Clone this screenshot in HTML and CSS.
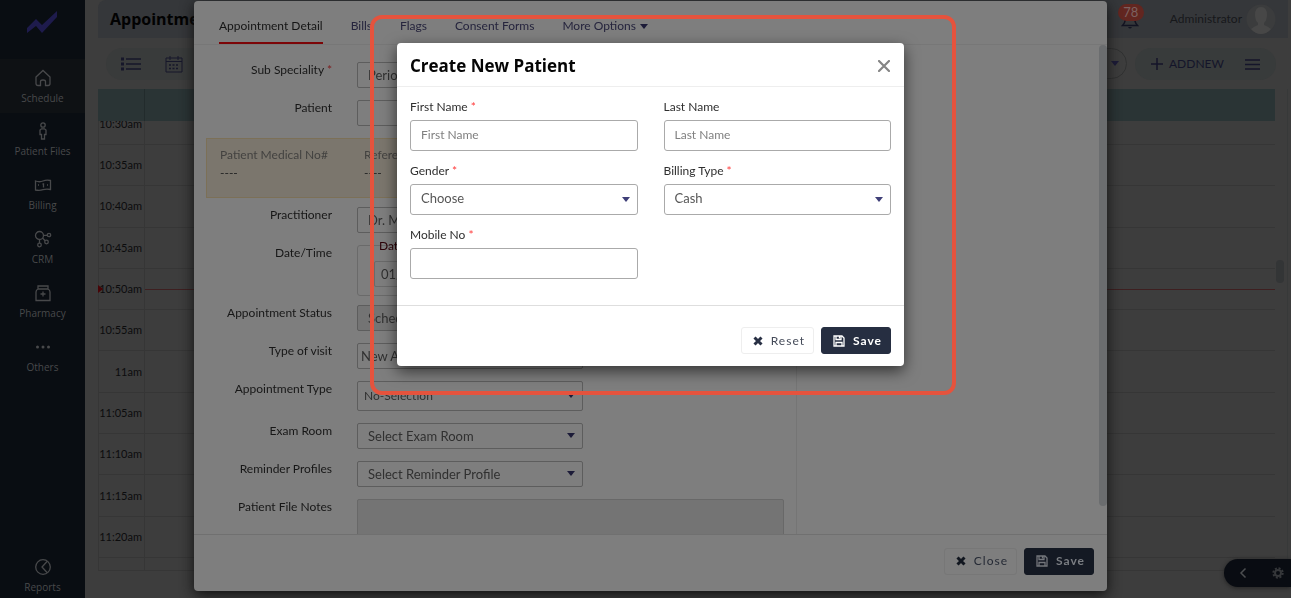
FILE: index.html
```html
<!DOCTYPE html>
<html lang="en">
<head>
<meta charset="utf-8">
<title>Appointments</title>
<link rel="stylesheet" href="styles.css">
</head>
<body>
<div class="app">
  <nav class="sidebar">
    <svg class="logo" width="30" height="24" viewBox="0 0 30 24"><path d="M0 17 9 8l6 6L30 0v6L15 22 9 15 0 22z" fill="#1e1b4c"/></svg>
    <a class="nav-item active" href="#"><svg width="18" height="18" viewBox="0 0 18 18"><path d="M2 8 9 1.500l7 6.500v6.500q0 2-2 2h-2.500v-4q0-1.500-2.500-1.500t-2.500 1.500v4H4q-2 0-2-2z"/></svg><span>Schedule</span></a>
    <a class="nav-item" href="#"><svg width="18" height="18" viewBox="0 0 18 18"><circle cx="9" cy="3" r="2.200"/><path d="M7.500 6.800h3l1.500 1.200v4.500h-1.500v4.500h-3v-4.500H6V8z"/></svg><span>Patient Files</span></a>
    <a class="nav-item" href="#"><svg width="18" height="18" viewBox="0 0 18 18"><path d="M1.500 5q4 1.500 7.500 0t7.500-.5v9q-4-1-7.500.2t-7.500.3zM8.500 8h1v3.500M4 9h1M13 9h1"/></svg><span>Billing</span></a>
    <a class="nav-item" href="#"><svg width="18" height="18" viewBox="0 0 18 18"><circle cx="5.500" cy="5.500" r="4"/><circle cx="15" cy="5" r="1.700"/><circle cx="12.500" cy="12" r="1.800"/><circle cx="5.500" cy="15" r="1.800"/><path d="M9.500 5.300h3.700M8.500 8l2.700 2.700M5.500 9.500v3.500"/></svg><span>CRM</span></a>
    <a class="nav-item" href="#"><svg width="18" height="18" viewBox="0 0 18 18"><path d="M4 5V2h10v3M4 5h10q2 1 2 3v8.500H2V8q0-2 2-3zM9 7.500v5M6.500 10h5"/></svg><span>Pharmacy</span></a>
    <a class="nav-item" href="#"><svg width="18" height="18" viewBox="0 0 18 18"><g class="dots"><circle cx="3.500" cy="9" r="1.500"/><circle cx="9" cy="9" r="1.500"/><circle cx="14.500" cy="9" r="1.500"/></g></svg><span>Others</span></a>
    <a class="nav-item last" href="#"><svg width="18" height="18" viewBox="0 0 18 18"><circle cx="9" cy="9" r="7.300"/><path d="M13 3.500 8 9l5 5.500"/></svg><span>Reports</span></a>
  </nav>
  <main class="main">
    <header class="topbar">
      <h1>Appointments</h1>
      <div class="account">
        <div class="bell">
          <svg width="18" height="20" viewBox="0 0 18 20"><path d="M1.500 15.500q3-3 3-8.500Q5.500 2 9 2t4.500 5q0 5.500 3 8.500z" fill="none" stroke="#121321" stroke-width="1.500"/><path d="M7 17h4q-2 3-4 0z" fill="#121321"/></svg>
          <span class="badge">78</span>
        </div>
        <span class="user">Administrator</span>
        <svg class="avatar" width="30" height="30" viewBox="0 0 30 30"><circle cx="15" cy="15" r="14.500" fill="#3b3c3d"/><path d="M15 3q6 0 6 8 0 5-3 8v2q5 2 7 4-4 5-10 5T5 25q2-2 7-4v-2q-3-3-3-8 0-8 6-8z" fill="#474747"/></svg>
      </div>
    </header>
    <div class="toolbar">
      <div class="views">
        <svg width="20" height="14" viewBox="0 0 20 14"><path d="M0 2h3M0 7h3M0 12h3" stroke-width="3"/><path d="M5 2h15M5 7h15M5 12h15" stroke-width="1.500"/></svg>
        <svg width="18" height="18" viewBox="0 0 18 18"><path d="M1 3h16v14H1zM1 6.500h16M5 1v4M13 1v4"/><path d="M4 10h10M4 13.500h10" stroke-dasharray="2 1.500" stroke-width="1.500"/></svg>
      </div>
      <div class="tools">
        <button class="picker" aria-label="Choose view"><i class="caret"></i></button>
        <div class="addnew">
          <button><svg width="12" height="12" viewBox="0 0 12 12"><path d="M6 0v12M0 6h12"/></svg>ADDNEW</button>
          <button aria-label="Menu"><svg width="15" height="11" viewBox="0 0 15 11"><path d="M0 1h15M0 5.500h15M0 10h15"/></svg></button>
        </div>
      </div>
    </div>
    <section class="calendar">
      <div class="cal-head"></div>
      <div class="slots">
        <div class="slot first"><span>10:30am</span></div>
        <div class="slot"><span>10:35am</span></div>
        <div class="slot"><span>10:40am</span></div>
        <div class="slot"><span>10:45am</span></div>
        <div class="slot now"><span>10:50am</span></div>
        <div class="slot"><span>10:55am</span></div>
        <div class="slot"><span>11am</span></div>
        <div class="slot"><span>11:05am</span></div>
        <div class="slot"><span>11:10am</span></div>
        <div class="slot"><span>11:15am</span></div>
        <div class="slot"><span>11:20am</span></div>
        <div class="slot end"><span></span></div>
      </div>
      <i class="cal-thumb"></i>
    </section>
  </main>
</div>

<div class="overlay detail-layer">
  <section class="detail" role="dialog" aria-label="Appointment Detail">
    <nav class="tabs">
      <a class="current" href="#">Appointment Detail</a>
      <a href="#">Bills</a>
      <a href="#">Flags</a>
      <a href="#">Consent Forms</a>
      <a href="#">More Options <i class="caret"></i></a>
    </nav>
    <div class="detail-body">
      <form class="detail-form">
        <div class="row"><label for="sub">Sub Speciality <b>*</b></label><input id="sub" value="Periodontics"></div>
        <div class="row"><label for="pat">Patient</label><input id="pat"></div>
        <dl class="banner">
          <div><dt>Patient Medical No#</dt><dd>----</dd></div>
          <div><dt>Reference No</dt><dd>----</dd></div>
        </dl>
        <div class="row"><label for="doc">Practitioner</label><input id="doc" value="Dr. M"></div>
        <div class="row"><label for="date">Date/Time</label>
          <div class="datebox"><span>Date</span><input id="date" value="01/"></div></div>
        <div class="row"><label for="status">Appointment Status</label><input id="status" class="shaded" value="Scheduled"></div>
        <div class="row"><label for="visit">Type of visit</label><input id="visit" class="tight" value="New Appointment"></div>
        <div class="row"><label for="type">Appointment Type</label><div class="select tall"><select id="type"><option>No-Selection</option></select><i class="caret"></i></div></div>
        <div class="row"><label for="room">Exam Room</label><div class="select"><select id="room"><option>Select Exam Room</option></select><i class="caret"></i></div></div>
        <div class="row"><label for="rem">Reminder Profiles</label><div class="select"><select id="rem"><option>Select Reminder Profile</option></select><i class="caret"></i></div></div>
        <div class="row wide"><label for="notes">Patient File Notes</label><textarea id="notes"></textarea></div>
      </form>
      <aside class="side"></aside>
      <i class="detail-thumb"></i>
    </div>
    <footer class="detail-foot">
      <button class="btn"><svg class="cross" width="10" height="10" viewBox="0 0 10 10"><path d="m1.500 1.500 7 7m0-7-7 7"/></svg>Close</button>
      <button class="btn primary"><svg class="disk" width="12" height="12" viewBox="0 0 12 12"><path d="M1 1h8l2 2v8H1zM3 1v3.500h5V1M3 11V7.500h6V11"/><path d="M6.500 1v2.500"/></svg>Save</button>
    </footer>
  </section>
</div>

<div class="overlay create-layer">
  <section class="create" role="dialog" aria-labelledby="create-title">
    <i class="highlight"></i>
    <header class="create-head">
      <h2 id="create-title">Create New Patient</h2>
      <button class="x" aria-label="Close dialog"><svg width="12" height="12" viewBox="0 0 12 12"><path d="m1 1 10 10M11 1 1 11"/></svg></button>
    </header>
    <form class="create-form">
      <div class="field"><label for="first">First Name <b>*</b></label><input id="first" placeholder="First Name"></div>
      <div class="field"><label for="last">Last Name</label><input id="last" placeholder="Last Name"></div>
      <div class="field"><label for="gender">Gender <b>*</b></label><div class="select"><select id="gender"><option>Choose</option></select><i class="caret"></i></div></div>
      <div class="field"><label for="bill">Billing Type <b>*</b></label><div class="select"><select id="bill"><option>Cash</option></select><i class="caret"></i></div></div>
      <div class="field"><label for="mobile">Mobile No <b>*</b></label><input id="mobile"></div>
    </form>
    <footer class="create-foot">
      <button class="btn"><svg class="cross" width="10" height="10" viewBox="0 0 10 10"><path d="m1.500 1.500 7 7m0-7-7 7"/></svg>Reset</button>
      <button class="btn primary"><svg class="disk" width="12" height="12" viewBox="0 0 12 12"><path d="M1 1h8l2 2v8H1zM3 1v3.500h5V1M3 11V7.500h6V11"/><path d="M6.500 1v2.500"/></svg>Save</button>
    </footer>
  </section>
</div>

<div class="dock">
  <svg width="8" height="12" viewBox="0 0 8 12"><path d="M6.500 1.500 2 6l4.500 4.500" fill="none" stroke="#4c4e50" stroke-width="1.500"/></svg>
  <svg width="12" height="12" viewBox="0 0 12 12"><circle cx="6" cy="6" r="3" fill="none" stroke="#35373a" stroke-width="2"/><circle cx="6" cy="6" r="4.700" fill="none" stroke="#35373a" stroke-width="2" stroke-dasharray="2 1.690"/></svg>
</div>
</body>
</html>
```

FILE: styles.css
```css
* { box-sizing: border-box; }
body {
  margin: 0;
  background: #3d3d3d;
  font: 13px/16px Lato, "Open Sans", sans-serif;
  overflow: hidden;
}
a { text-decoration: none; color: inherit; }
h1, h2, dl, dd { margin: 0; }
button, input, select, textarea { font: inherit; color: inherit; }
button { border: 0; background: none; padding: 0; }
svg { flex: none; display: block; }
.caret {
  border: 4px solid transparent;
  border-top: 5px solid #1c1b38;
  border-bottom: 0;
}

.app { display: flex; min-height: 100vh; }
.sidebar {
  width: 85px;
  flex: none;
  display: flex;
  flex-direction: column;
  background: #090d12;
  color: #48494b;
  font: 10px/16px "Open Sans", sans-serif;
}
.logo { margin: 11px 27px 24px; }
.nav-item {
  height: 54px;
  padding-top: 9px;
  display: flex;
  flex-direction: column;
  align-items: center;
  gap: 3px;
}
.nav-item.active { background: #0e1114; padding-top: 10px; }
.nav-item svg { fill: none; stroke: #48494b; stroke-width: 1.3; }
.nav-item .dots { fill: #48494b; stroke: none; }
.nav-item.last { margin-top: auto; height: 40px; padding: 0; }

.main { flex: 1; min-width: 0; display: flex; flex-direction: column; padding: 0 3px 27px 13px; }
.topbar {
  height: 38px;
  display: flex;
  align-items: center;
  justify-content: space-between;
  padding: 0 12px;
  background: #35373a;
  border-radius: 8px 0 0 0;
}
.topbar h1 { font: 700 16px/20px "Open Sans", sans-serif; color: #020202; }
.account { display: flex; align-items: center; gap: 4px; color: #17181a; }
.user { margin-left: 27px; font-size: 12px; }
.bell { position: relative; margin-top: 1px; }
.badge {
  position: absolute;
  left: -3px;
  top: -6px;
  width: 26px;
  height: 17px;
  border-radius: 9px;
  background: #622620;
  color: #7c6260;
  text-align: center;
}
.toolbar { height: 51px; display: flex; justify-content: space-between; padding: 10px 12px 9px 8px; }
.views { width: 200px; display: flex; align-items: center; gap: 24px; padding-left: 15px; background: #393b3b; border-radius: 16px; }
.views svg { fill: none; stroke: #16172a; }
.tools { display: flex; gap: 8px; }
.picker { width: 60px; height: 31px; border: 1px solid #303131; border-radius: 16px; display: flex; align-items: center; justify-content: flex-end; padding-right: 7px; }
.addnew { width: 141px; display: flex; align-items: center; justify-content: space-between; padding: 0 16px; background: #383b3b; border-radius: 16px; color: #14152a; font-size: 12px; }
.addnew button { display: flex; align-items: center; gap: 6px; }
.addnew svg { stroke: #14152a; stroke-width: 1.5; }
.calendar { position: relative; flex: 1; display: flex; flex-direction: column; padding-right: 12px; border-right: 1px solid #373939; }
.cal-head { height: 32px; background: linear-gradient(90deg, transparent 46px, #222b2c 46px, #222b2c 47px, transparent 47px) #2a3435; }
.slots { flex: 1; display: flex; flex-direction: column; }
.slot { flex: 1; display: flex; border: 1px solid #363636; border-width: 0 0 1px 1px; position: relative; }
.slot span { width: 46px; display: flex; align-items: center; justify-content: flex-end; border-right: 1px solid #363636; padding-right: 2px; font-size: 11px; color: #0c0c0d; }
.slot.first { flex: 0 0 24px; overflow: hidden; }
.slot.first span { align-items: flex-start; margin-top: -5px; }
.slot.end { flex: 0 0 13px; }
.slot.now::before { content: ""; position: absolute; left: -1px; top: 16px; border: 4px solid transparent; border-left: 5px solid #480407; border-right: 0; }
.slot.now::after { content: ""; position: absolute; left: 46px; right: 0; top: 20px; height: 1px; background: #3e1f20; }
.cal-thumb { position: absolute; right: 3px; top: 171px; width: 8px; height: 23px; border-radius: 4px; background: #333536; }

.overlay { position: fixed; inset: 0 0 0 10px; display: flex; justify-content: center; align-items: flex-start; }
.detail-layer { padding: 1px 0 7px; }
.detail {
  width: 913px;
  height: 100%;
  display: flex;
  flex-direction: column;
  background: #7e7e7e;
  border-radius: 4px;
  box-shadow: 0 4px 14px #111;
}
.tabs { flex: none; display: flex; gap: 28px; padding: 0 25px; border-bottom: 1px solid #777; color: #25243d; font-size: 12px; }
.tabs a { padding: 17px 0 8px; border-bottom: 2px solid transparent; display: flex; align-items: center; gap: 4px; }
.tabs .current { border-color: #7c0507; color: #151515; }
.detail-body { flex: 1; min-height: 0; display: flex; position: relative; overflow: hidden; }
.detail-form { width: 602px; padding: 17px 12px 0; display: flex; flex-direction: column; gap: 12px; color: #303030; }
.detail-form > * { flex: none; }
.side { flex: 1; border-left: 1px solid #757575; }
.detail-thumb { position: absolute; right: 0; top: 0; width: 8px; height: 461px; border-radius: 4px; background: #6b6d6f; }
.row { display: grid; grid-template-columns: 126px 226px; column-gap: 25px; align-items: start; }
.row.wide { grid-template-columns: 126px 1fr; }
.row label { text-align: right; color: #171717; font-size: 12px; }
label b { font-weight: 400; color: #ff3b3b; }
.row label b { color: #7e1b1d; }
.row input, .row select, .row textarea {
  width: 100%;
  height: 26px;
  border: 1px solid #5d5d5d;
  border-radius: 2px;
  background: #7e7e7e;
  padding: 0 10px;
}
.row input.shaded { background: #747474; }
.row input.tight { padding: 0 3px; }
.row textarea { display: block; height: 60px; background: #747474; border-color: #686868; resize: none; }
.select { position: relative; }
.select select { appearance: none; display: block; }
.select .caret { position: absolute; right: 8px; top: 50%; margin-top: -3px; }
.row .tall select { height: 30px; padding: 0 6px; font-size: 12px; }
.banner { height: 60px; margin-bottom: -3px; padding: 8px 13px; display: grid; grid-template-columns: 144px 1fr; background: #7b766d; border: 1px solid #7c7057; color: #434240; font-size: 12px; }
.banner dd { margin-top: 2px; color: #222; }
.datebox { height: 51px; margin-bottom: -3px; border: 1px solid #6a6a6a; border-radius: 3px; padding: 0 10px 0 16px; }
.datebox span { display: block; margin-top: -8px; padding-left: 5px; color: #2c0308; height: 23px; line-height: 16px; font-size: 12px; }
.row .datebox input { border-color: #6a6a6a; padding: 0 6px; }
.detail-foot { flex: none; height: 57px; border-top: 1px solid #707070; display: flex; justify-content: flex-end; align-items: center; gap: 7px; padding: 0 13px 4px; color: #252a35; }

.btn { height: 27px; padding: 0 8px 0 11px; display: flex; align-items: center; gap: 8px; border: 1px solid #777; border-radius: 3px; letter-spacing: 1px; font-size: 12px; }
.btn svg { fill: none; stroke: #11161f; stroke-width: 3; }
.btn .disk { stroke: #73767b; stroke-width: 1.3; }
.btn.primary { background: #141923; border-color: #141923; color: #7a7d82; font-weight: 700; }

.create-layer { padding-top: 43px; }
.create { position: relative; width: 507px; background: #fff; border-radius: 4px; box-shadow: 0 5px 15px rgba(0, 0, 0, .6); }
.highlight { position: absolute; inset: -28px -52px -29px -27px; border: 4px solid #e5533d; border-radius: 12px; pointer-events: none; }
.create-head { height: 44px; display: flex; justify-content: space-between; align-items: center; padding: 2px 14px 0 13px; border-bottom: 1px solid #eee; }
.create-head h2 { font: 700 17px/22px "Open Sans", sans-serif; color: #050505; }
.x svg { stroke: #858585; stroke-width: 2.2; stroke-linecap: round; }
.create-form { position: relative; display: grid; grid-template-columns: 1fr 1fr; gap: 12px 26px; padding: 12px 13px 26px; }
.field { display: flex; flex-direction: column; gap: 5px; color: #2f2f2f; }
.field label { font-size: 12px; }
.field input, .field select { width: 100%; height: 31px; border: 1px solid #aaa; border-radius: 3px; background: #fff; padding: 0 10px 3px; color: #565656; }
.field ::placeholder { color: #808080; opacity: 1; font-size: 12px; }
.field .caret { border-top-color: #3f3f78; }
.create-foot { position: relative; display: flex; justify-content: flex-end; gap: 7px; padding: 21px 13px 12px; border-top: 1px solid #dedede; }
.create .btn { border-color: #eee; color: #454b59; }
.create .btn svg { stroke: #283044; }
.create .btn.primary { background: #262e41; border-color: #262e41; color: #fff; }
.create .btn .disk { stroke: #fff; }

.dock { position: fixed; right: 0; bottom: 11px; width: 67px; height: 28px; border-radius: 14px 0 0 14px; background: #090c12; display: flex; align-items: center; justify-content: space-between; padding: 0 7px 0 15px; box-shadow: 0 1px 4px #222; }
```
